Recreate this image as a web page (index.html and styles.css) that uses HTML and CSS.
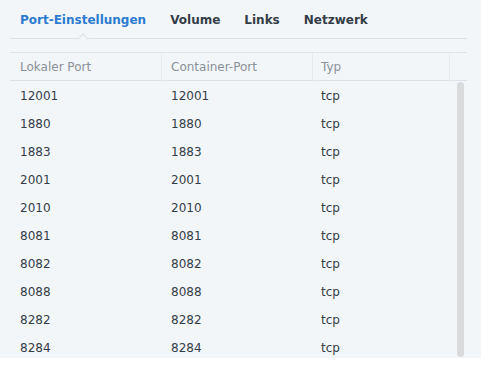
FILE: index.html
```html
<!DOCTYPE html>
<html lang="de">

<head>
    <meta charset="UTF-8">
    <meta name="viewport" content="width=device-width, initial-scale=1.0">
    <title>Container - Port-Einstellungen</title>

    <link rel="stylesheet" href="styles.css">
</head>

<body>
    <div class="panel">
        <ul class="tabs">
            <li class="tab active">Port-Einstellungen</li>
            <li class="tab">Volume</li>
            <li class="tab">Links</li>
            <li class="tab">Netzwerk</li>
        </ul>

        <div class="grid">
            <div class="grid-head">
                <div class="cell">Lokaler Port</div>
                <div class="cell">Container-Port</div>
                <div class="cell">Typ</div>
                <div class="cell"></div>
            </div>
            <div class="grid-body">
                <div class="rows" id="rows"></div>
                <div class="scrollbar"></div>
            </div>
        </div>
    </div>

    <script>
        const ports = ['12001', '1880', '1883', '2001', '2010', '8081', '8082', '8088', '8282', '8284'];
        const rows = document.getElementById('rows');

        ports.forEach((port) => {
            const row = document.createElement('div');
            row.className = 'row';
            row.innerHTML = '<div class="cell">' + port + '</div>' +
                '<div class="cell">' + port + '</div>' +
                '<div class="cell">tcp</div>';
            rows.appendChild(row);
        });
    </script>
</body>

</html>
```

FILE: styles.css
```css
body {
    margin: 0;
    background-color: #fff;
    font-family: "DejaVu Sans", Verdana, sans-serif;
    font-size: 12px;
    color: #333d47;
}

.panel {
    height: 358px;
    background-color: #f3f6f9;
    padding: 0 14px 0 10px;
    overflow: hidden;
}

.tabs {
    display: flex;
    gap: 24px;
    margin: 0;
    padding: 2px 10px 0;
    list-style: none;
    height: 36px;
    border-bottom: 1px solid #dce1e7;
    position: relative;
}

.tab {
    font-weight: bold;
    line-height: 36px;
    position: relative;
}

.tab.active {
    color: #2b7bd0;
}

/* little notch under the active tab */
.tab.active::after {
    content: "";
    position: absolute;
    left: 50%;
    bottom: -5px;
    width: 7px;
    height: 7px;
    margin-left: -4px;
    background-color: #f3f6f9;
    border-top: 1px solid #dce1e7;
    border-left: 1px solid #dce1e7;
    transform: rotate(45deg);
}

.grid {
    margin-top: 13px;
    border-top: 1px solid #e1e5ea;
}

.grid-head {
    display: grid;
    grid-template-columns: 152px 151px 137px 1fr;
    height: 27px;
    border-bottom: 1px solid #dce1e7;
    color: #8a9099;
}

.grid-head .cell {
    line-height: 27px;
    padding: 1px 0 0 10px;
    border-right: 1px solid #e6e9ed;
}

.grid-head .cell:nth-child(2) {
    padding-left: 9px;
}

.grid-head .cell:nth-child(3) {
    padding-left: 8px;
}

.grid-head .cell:last-child {
    border-right: none;
}

.grid-body {
    display: flex;
}

.rows {
    flex: 1;
}

.row {
    display: grid;
    grid-template-columns: 152px 151px 1fr;
    height: 28px;
}

.row .cell {
    line-height: 28px;
    padding: 1px 0 0 10px;
}

.row .cell:nth-child(2) {
    padding-left: 9px;
}

.row .cell:nth-child(3) {
    padding-left: 8px;
}

.scrollbar {
    width: 7px;
    height: 275px;
    margin: 1px 3px 0 6px;
    background-color: #d9dadc;
    border-radius: 4px;
}
```
